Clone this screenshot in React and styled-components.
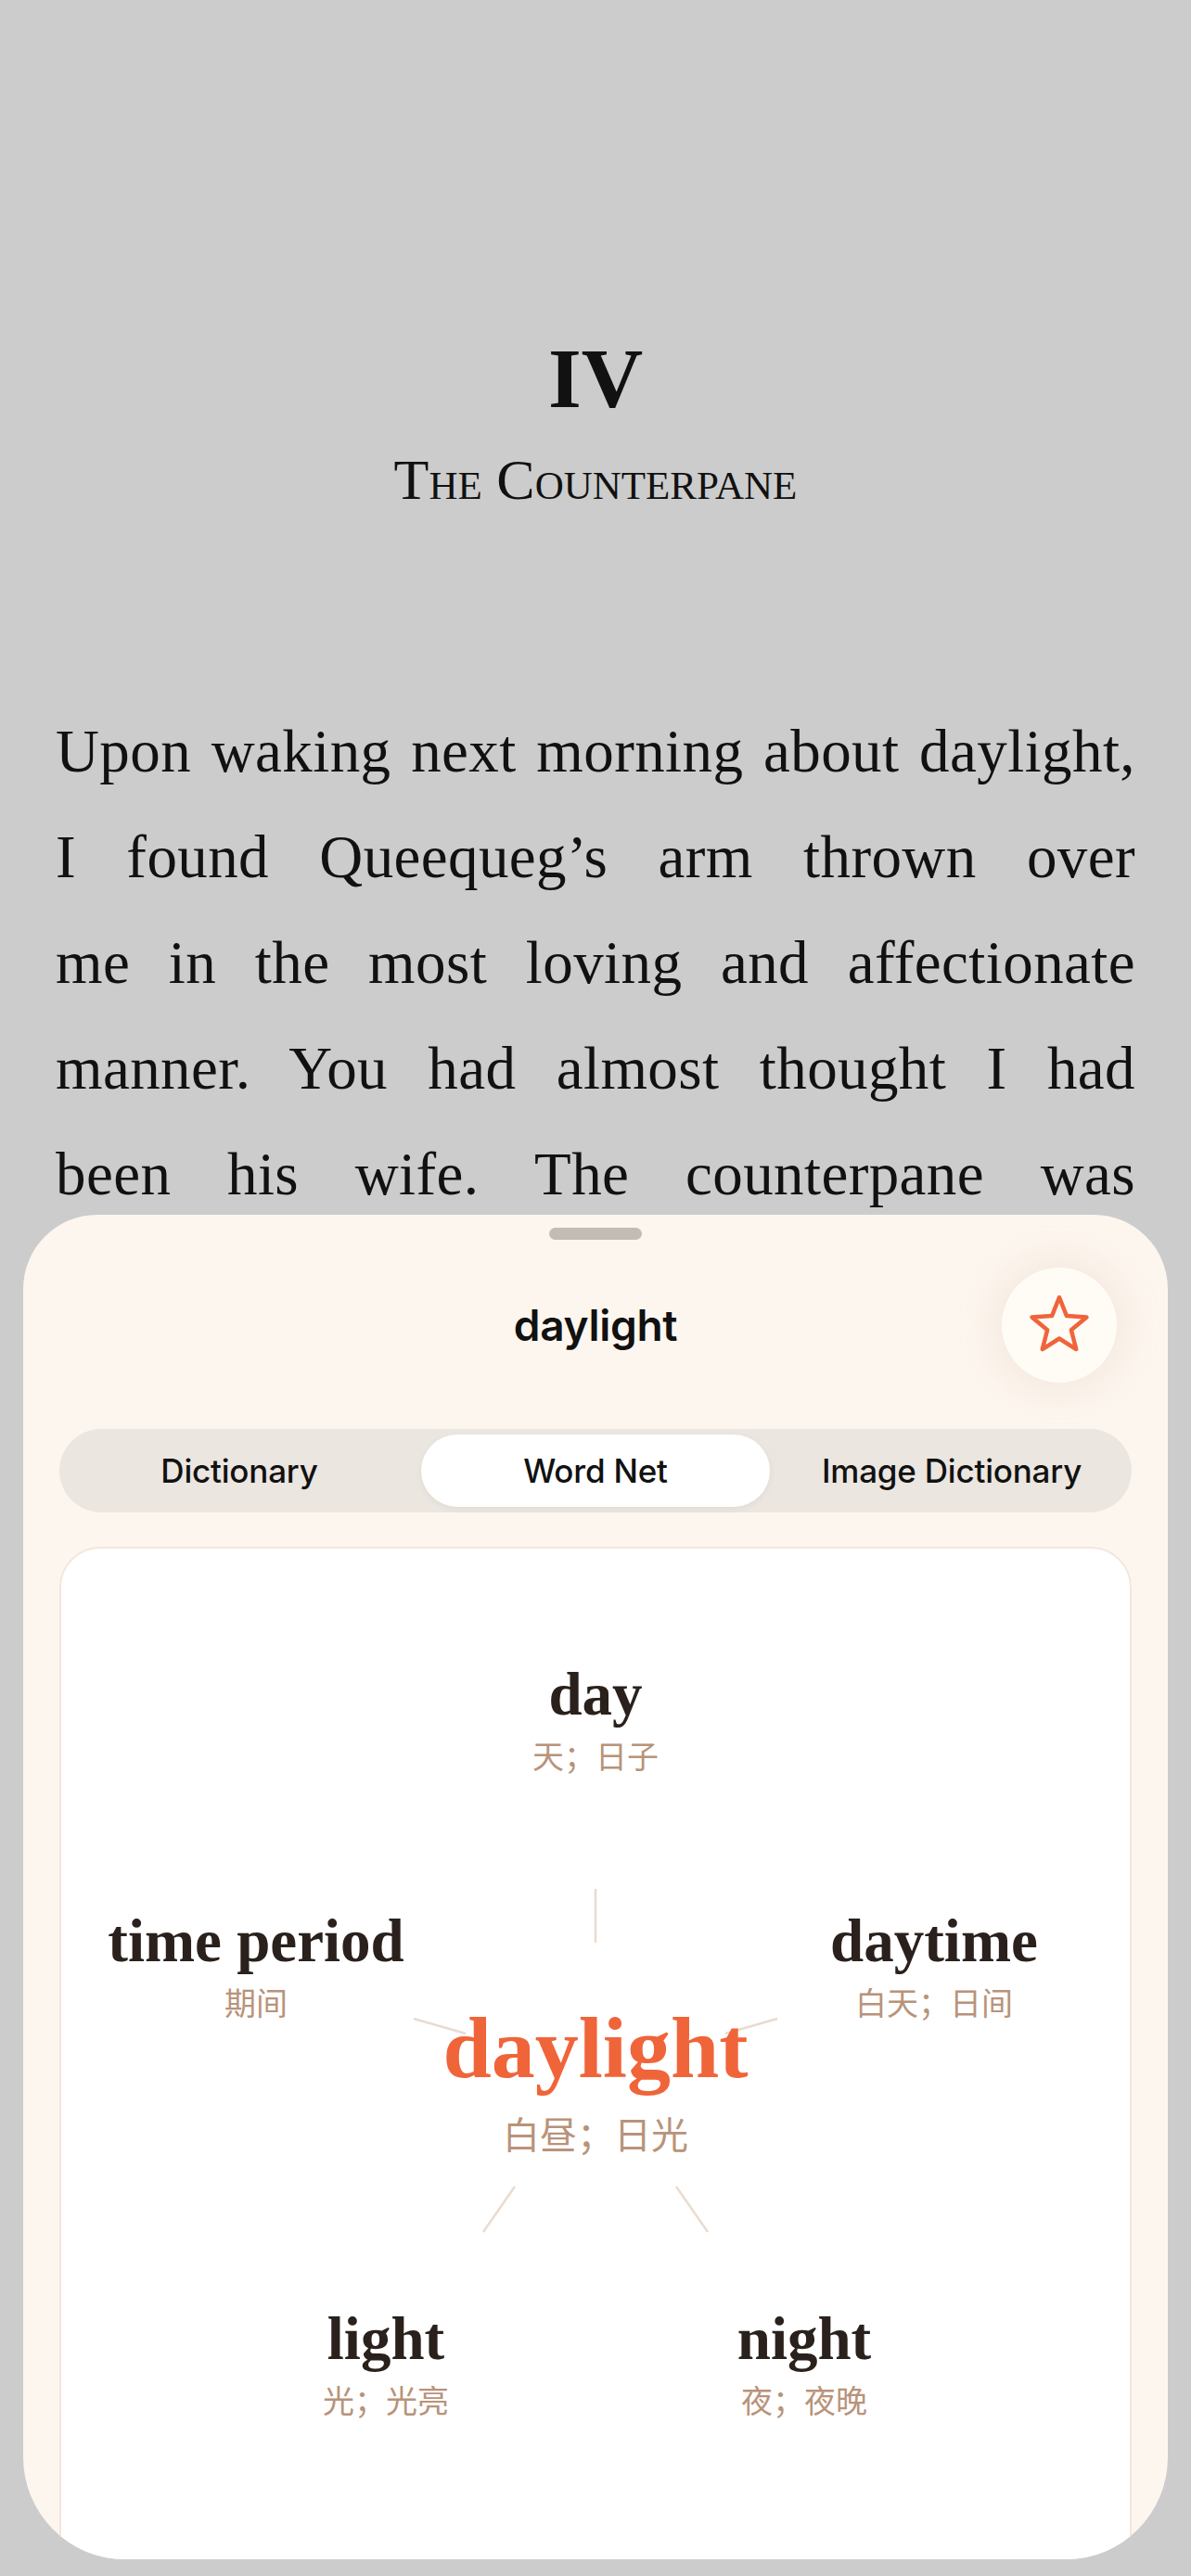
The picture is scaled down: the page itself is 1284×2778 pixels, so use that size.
import React from "react";
import styled, { createGlobalStyle } from "styled-components";

const GlobalStyle = createGlobalStyle`
  html, body { margin: 0; padding: 0; background: #cccccc; }
  * { box-sizing: border-box; }
`;

const Page = styled.div`
  position: relative;
  width: 1284px;
  height: 2778px;
  overflow: hidden;
  background: #cccccc;
`;

const Article = styled.article`
  padding: 358px 60px 0;
  color: #111111;
  font-family: "Liberation Serif", "Times New Roman", serif;
`;

const ChapterNumber = styled.h1`
  margin: 0;
  text-align: center;
  font-size: 92px;
  line-height: 100px;
  font-weight: 700;
`;

const ChapterTitle = styled.h2`
  margin: 24px 0 0;
  text-align: center;
  font-size: 62px;
  line-height: 70px;
  font-weight: 400;
  font-variant: small-caps;
`;

const Body = styled.div`
  margin-top: 201px;
  font-size: 65px;
  line-height: 114px;
  letter-spacing: 0.4px;
`;

const BodyLine = styled.span`
  display: block;
  text-align: justify;
  text-align-last: justify;
  white-space: nowrap;
`;

const Sheet = styled.section`
  position: absolute;
  left: 25px;
  right: 25px;
  top: 1310px;
  bottom: 18px;
  background: #fdf6ef;
  border-radius: 80px 80px 110px 110px;
  overflow: hidden;
  display: flex;
  flex-direction: column;
  padding: 14px 39px 0;
  & > * { flex-shrink: 0; }
`;

const Handle = styled.div`
  align-self: center;
  width: 100px;
  height: 13px;
  border-radius: 7px;
  background: #c4bbb5;
`;

const Header = styled.header`
  position: relative;
  margin-top: 30px;
  height: 124px;
  display: flex;
  align-items: center;
  justify-content: center;
`;

const SheetTitle = styled.div`
  font-family: Inter, "Noto Sans", sans-serif;
  font-size: 46px;
  font-weight: 600;
  color: #111111;
  letter-spacing: -0.3px;
`;

const StarButton = styled.button`
  position: absolute;
  right: 16px;
  top: 0;
  width: 124px;
  height: 124px;
  border-radius: 50%;
  border: none;
  padding: 0;
  background: #fffcf6;
  box-shadow: 0 0 44px 8px rgba(190, 160, 130, 0.16);
  display: flex;
  align-items: center;
  justify-content: center;
`;

const Segmented = styled.div`
  margin-top: 50px;
  height: 90px;
  border-radius: 45px;
  background: #ebe6e0;
  padding: 6px;
  display: grid;
  grid-template-columns: repeat(3, 1fr);
  gap: 8px;
`;

const Segment = styled.div`
  display: flex;
  align-items: center;
  justify-content: center;
  border-radius: 39px;
  background: ${(p) => (p.$active ? "#ffffff" : "transparent")};
  box-shadow: ${(p) => (p.$active ? "0 2px 6px rgba(120, 90, 60, 0.08)" : "none")};
  font-family: Inter, "Noto Sans", sans-serif;
  font-size: 35px;
  font-weight: 500;
  color: #111111;
  letter-spacing: -0.2px;
`;

const Card = styled.div`
  margin-top: 37px;
  height: 1150px;
  background: #ffffff;
  border: 2px solid #f3e6db;
  border-radius: 44px;
`;

const Canvas = styled.div`
  position: relative;
  width: 100%;
  height: 100%;
`;

const Links = styled.svg`
  position: absolute;
  left: 0;
  top: 0;
  width: 100%;
  height: 100%;
  overflow: visible;
`;

const Node = styled.div`
  position: absolute;
  transform: translateX(-50%);
  display: flex;
  flex-direction: column;
  align-items: center;
  white-space: nowrap;
`;

const Word = styled.div`
  font-family: "Liberation Serif", "Times New Roman", serif;
  font-weight: 700;
  font-size: ${(p) => (p.$main ? 94 : 65)}px;
  line-height: ${(p) => (p.$main ? 94 : 65)}px;
  color: ${(p) => (p.$main ? "#f0643a" : "#2a211c")};
`;

const Gloss = styled.div`
  margin-top: ${(p) => (p.$main ? 25 : 16)}px;
  font-family: "Noto Sans CJK SC", "Noto Sans", sans-serif;
  font-size: ${(p) => (p.$main ? 40 : 34)}px;
  line-height: ${(p) => (p.$main ? 40 : 34)}px;
  color: #b8937a;
`;

const nodes = [
  { word: "day", gloss: "天；日子", x: 576, y: 125 },
  { word: "time period", gloss: "期间", x: 210, y: 391 },
  { word: "daytime", gloss: "白天；日间", x: 941, y: 391 },
  { word: "daylight", gloss: "白昼；日光", x: 576, y: 491, main: true },
  { word: "light", gloss: "光；光亮", x: 350, y: 820 },
  { word: "night", gloss: "夜；夜晚", x: 801, y: 820 },
];

const links = [
  [576, 367, 576, 425],
  [380, 507, 436, 523],
  [772, 507, 716, 523],
  [489, 688, 455, 737],
  [663, 688, 697, 737],
];

function StarIcon() {
  const pts = [];
  for (let k = 0; k < 10; k++) {
    const a = ((-90 + 36 * k) * Math.PI) / 180;
    const r = k % 2 === 0 ? 31 : 13.5;
    pts.push(`${(r * Math.cos(a)).toFixed(2)},${(r * Math.sin(a)).toFixed(2)}`);
  }
  return (
    <svg width="72" height="68" viewBox="-36 -35 72 68">
      <polygon
        points={pts.join(" ")}
        fill="none"
        stroke="#f0643a"
        strokeWidth="4.5"
        strokeLinejoin="round"
      />
    </svg>
  );
}

const lines = [
  "Upon waking next morning about daylight,",
  "I found Queequeg’s arm thrown over",
  "me in the most loving and affectionate",
  "manner. You had almost thought I had",
  "been his wife. The counterpane was",
];

export default function App() {
  return (
    <Page>
      <GlobalStyle />
      <Article>
        <ChapterNumber>IV</ChapterNumber>
        <ChapterTitle>The Counterpane</ChapterTitle>
        <Body>
          {lines.map((l, i) => (
            <BodyLine key={i}>{l}</BodyLine>
          ))}
        </Body>
      </Article>

      <Sheet>
        <Handle />
        <Header>
          <SheetTitle>daylight</SheetTitle>
          <StarButton aria-label="Favorite">
            <StarIcon />
          </StarButton>
        </Header>
        <Segmented>
          <Segment>Dictionary</Segment>
          <Segment $active>Word Net</Segment>
          <Segment>Image Dictionary</Segment>
        </Segmented>
        <Card>
          <Canvas>
            <Links>
              {links.map(([x1, y1, x2, y2], i) => (
                <line
                  key={i}
                  x1={x1}
                  y1={y1}
                  x2={x2}
                  y2={y2}
                  stroke="#eadbcf"
                  strokeWidth="2.5"
                />
              ))}
            </Links>
            {nodes.map((n) => (
              <Node key={n.word} style={{ left: n.x, top: n.y }}>
                <Word $main={n.main}>{n.word}</Word>
                <Gloss $main={n.main}>{n.gloss}</Gloss>
              </Node>
            ))}
          </Canvas>
        </Card>
      </Sheet>
    </Page>
  );
}
